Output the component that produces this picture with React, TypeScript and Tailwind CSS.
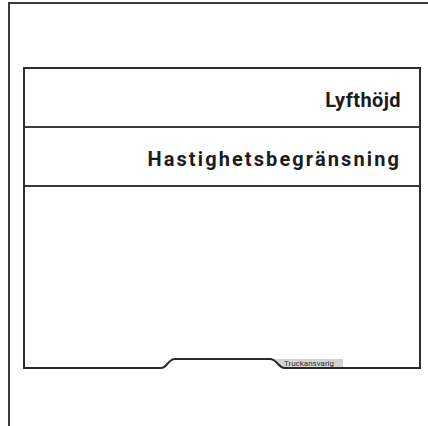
const rows = [
	{ label: "Lyfthöjd", tracking: "tracking-[0.4px]" },
	{ label: "Hastighetsbegränsning", tracking: "tracking-[2.1px]" },
];

// Settings panel with two right-aligned labels and a notched bottom edge.
export default function App() {
	return (
		<div className="h-[426px] w-[428px] overflow-hidden bg-white" style={{ fontFamily: "Roboto, 'Liberation Sans', sans-serif" }}>
			<div className="ml-[8px] mt-[2px] h-[430px] border-l-2 border-t-2 border-[#3a3a3a] pl-[13px] pt-[63px]">
				<div className="relative w-[398px] border-x-2 border-t-2 border-[#2e2e2e]">
					{rows.map((row) => (
						<div
							key={row.label}
							className={`flex h-[59px] items-center justify-end border-b-2 border-[#3a3a3a] pr-[18px] pt-[4px] text-[20px] font-bold text-[#1c1c1c] ${row.tracking}`}
						>
							{row.label}
						</div>
					))}
					<div className="h-[182px]" />
					<svg className="absolute bottom-[-2px] left-[-2px]" width="398" height="16" viewBox="0 0 398 16">
						<path d="M247 4 C254 4 255 13 262 13 H320 V4 Z" fill="#d3d3d3" />
						<path
							d="M0 13 H138 C144 13 145 4 152 4 H247 C254 4 255 13 262 13 H398"
							fill="none"
							stroke="#2a2a2a"
							strokeWidth="2"
						/>
					</svg>
					<div className="absolute bottom-[1px] left-[259px] text-[8px] leading-[9px] text-[#333]">Truckansvarig</div>
				</div>
			</div>
		</div>
	);
}
